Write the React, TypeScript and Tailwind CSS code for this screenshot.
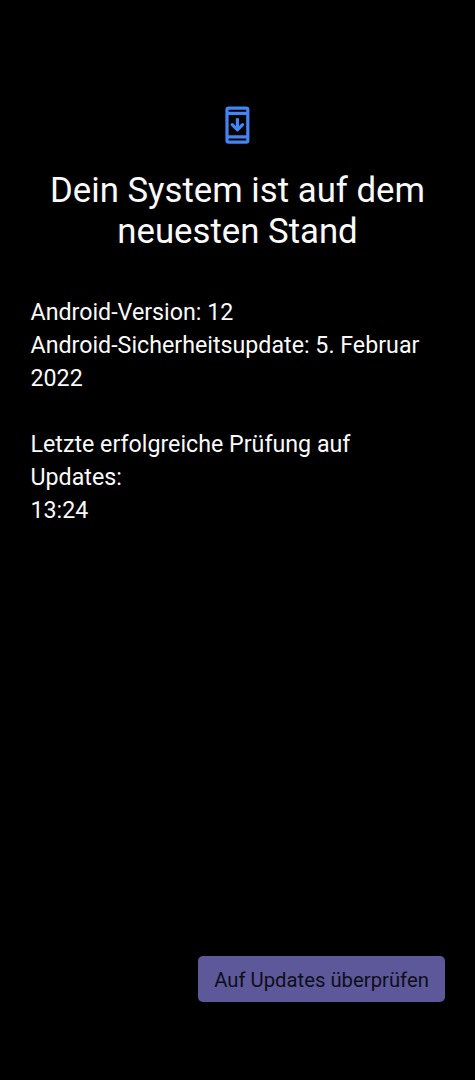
import React from "react";

type UpdateInfo = {
  androidVersion: string;
  securityUpdate: string;
  lastCheck: string;
};

const info: UpdateInfo = {
  androidVersion: "12",
  securityUpdate: "5. Februar 2022",
  lastCheck: "13:24",
};

function SystemUpdateIcon() {
  return (
    <svg
      viewBox="0 0 25 38"
      className="w-[25px] h-[38px] text-[#4285f4]"
      fill="none"
      stroke="currentColor"
      strokeWidth="3.2"
      strokeLinejoin="round"
      aria-hidden="true"
    >
      <rect x="2" y="2.1" width="20.8" height="34" rx="1.6" />
      <path d="M2 7.3h20.8M2 30.9h20.8" />
      <path d="M12.4 12.2v11.4" strokeWidth="3.2" />
      <path d="M7.2 18.6l5.2 5.2 5.2-5.2" strokeLinecap="round" />
    </svg>
  );
}

export default function App() {
  return (
    <main className="min-h-[1080px] bg-black text-[#fafafa] font-[Roboto,sans-serif] flex flex-col px-[30px] pt-[106px] pb-[78px]">
      <header className="flex flex-col items-center">
        <SystemUpdateIcon />
        <h1 className="mt-[26px] text-[34.75px] leading-[41px] text-center">
          Dein System ist auf dem
          <br />
          neuesten Stand
        </h1>
      </header>

      <section className="mt-[44px] pl-[0.5px] text-[23.22px] leading-[33px]">
        <p>{`Android-Version: ${info.androidVersion}`}</p>
        <p>{`Android-Sicherheitsupdate: ${info.securityUpdate}`}</p>
        <p className="mt-[33px]">
          Letzte erfolgreiche Prüfung auf Updates:
          <br />
          {info.lastCheck}
        </p>
      </section>

      <button
        type="button"
        className="mt-auto self-end w-[247px] h-[46px] pt-0.5 rounded-[5px] bg-[#5c589a] text-[#0e0e1a] text-[20.3px] whitespace-nowrap"
      >
        Auf Updates überprüfen
      </button>
    </main>
  );
}
